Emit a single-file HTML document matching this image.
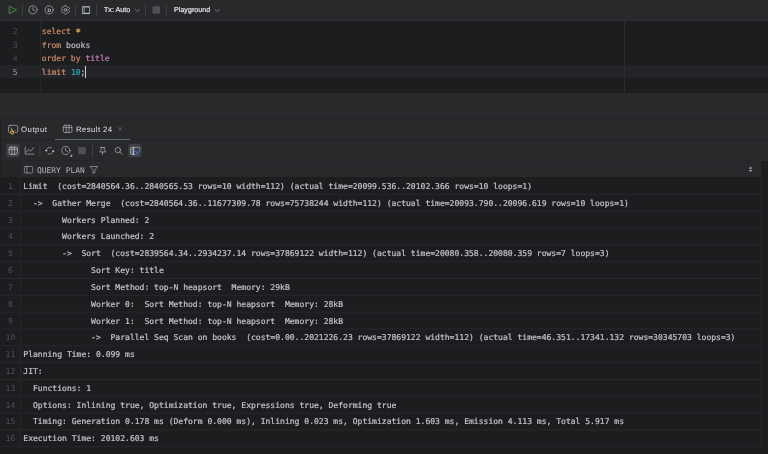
<!DOCTYPE html>
<html><head><meta charset="utf-8">
<style>
*{box-sizing:border-box;margin:0;padding:0}
html,body{width:768px;height:454px;overflow:hidden;background:#28292b}
body{position:relative;-webkit-font-smoothing:antialiased;text-rendering:geometricPrecision;font-family:"Liberation Sans",sans-serif;color:#dfe1e5}
.abs{position:absolute}
.mono{font-family:"DejaVu Sans Mono","Liberation Mono",monospace;font-size:8.066px;white-space:pre}
#topbar{left:0;top:0;width:768px;height:20.4px;background:#28292b}
#editor{left:0;top:20.4px;width:768px;height:72.5px;background:#1c1d1f;overflow:hidden}
#curline{left:0;top:44.2px;width:768px;height:13.8px;background:#232428}
#gutline{left:40.1px;top:0;width:1px;height:73px;background:#27282b}
#margin{left:624px;top:0;width:1px;height:73px;background:#2a2b2e}
.ln{left:0;width:17.5px;text-align:right;color:#4b5059;height:13.5px;line-height:13.5px}
.code{-webkit-text-stroke:0.18px;left:41.8px;height:13.5px;line-height:13.5px;color:#bcbec4}
.k{color:#cf8e6d}.s{color:#e9b350}.p{color:#c77dbb}.n{color:#2aacb8}
.ui{color:#dfe1e5;white-space:pre;will-change:transform;-webkit-text-stroke:0.22px #dfe1e5}
.tb{font-size:7.05px;letter-spacing:0.06px}
.tab{font-size:7.8px;-webkit-text-stroke:0}
#sep1{left:0;top:117.5px;width:768px;height:1px;background:#212225}
#sep2{left:0;top:138.8px;width:768px;height:1px;background:#212225}
#tabul{left:55px;top:138.7px;width:75.2px;height:1.3px;background:#64676d}
#grid{left:0;top:160.8px;width:768px;height:294px;background:#1c1d1f}
#hdr{left:20.7px;top:160.4px;width:740.6px;height:16.9px;background:#28292b}
.row{left:0;width:761.3px;height:16.82px}
.rn{top:0.9px;left:0;width:20.8px;text-align:center;color:#50535a;line-height:16.84px;height:16.84px}
.rt{top:0.9px;left:23.3px;color:#c0c2c8;-webkit-text-stroke:0.22px #c0c2c8;line-height:16.84px;height:16.84px}
#vline{left:20.2px;top:177.3px;width:1px;height:269.5px;background:#26282b}
#vline2{left:760.8px;top:177.3px;width:1px;height:269.5px;background:#26282b}
</style></head><body>
<div id="topbar" class="abs"></div>
<div id="editor" class="abs">
  <div id="curline" class="abs"></div>
  <div id="gutline" class="abs"></div>
  <div id="margin" class="abs"></div>
  <div class="abs" style="left:0;top:0;width:768px;height:72px;will-change:transform">
  <div class="abs" style="left:51.8px;top:0.2px;width:1px;height:0.9px;background:#8f6450"></div>
  <div class="abs" style="left:100.9px;top:0.2px;width:1px;height:0.9px;background:#8f6450"></div>
  <div class="abs mono ln" style="top:5.0px">2</div>
  <div class="abs mono ln" style="top:18.5px">3</div>
  <div class="abs mono ln" style="top:32.0px">4</div>
  <div class="abs mono ln" style="top:45.5px;color:#a1a3ab">5</div>
  <div class="abs mono code" style="top:5.0px"><span class="k">select</span> <span class="s" style="position:relative;top:1.3px;font-weight:bold;font-size:8.8px;line-height:8px;display:inline-block;width:4.85px;text-indent:-0.3px">*</span></div>
  <div class="abs mono code" style="top:18.5px"><span class="k">from</span> books</div>
  <div class="abs mono code" style="top:32.0px"><span class="k">order by</span> <span class="p">title</span></div>
  <div class="abs mono code" style="top:45.5px"><span class="k">limit</span> <span class="n">10</span>;</div>
  </div>
  <div class="abs" style="left:84.9px;top:45.6px;width:0.9px;height:12px;background:#ced0d6"></div>
</div>
<div class="abs" style="left:0;top:19.9px;width:768px;height:1px;background:#2d2f32"></div>
<div class="abs ui tb" style="left:104.2px;top:7.2px">Tx: Auto</div>
<div class="abs ui tb" style="left:174.4px;top:7.2px">Playground</div>
<div id="sep1" class="abs"></div>
<div id="sep2" class="abs"></div>
<div class="abs ui tab" style="left:20.9px;top:125px;letter-spacing:0.5px">Output</div>
<div class="abs ui tab" style="left:76.2px;top:125px;letter-spacing:0.4px">Result 24</div>
<div id="tabul" class="abs"></div>
<div id="grid" class="abs"></div>
<div class="abs" style="left:0;top:160.4px;width:20.7px;height:16.9px;background:#242527"></div>
<div id="hdr" class="abs"></div>
<div class="abs" style="left:1px;top:160.1px;width:760.3px;height:0.9px;background:#242528"></div>
<div class="abs" style="left:0;top:118px;width:1.1px;height:60px;background:#1d1e20"></div>
<div class="abs mono" style="left:36.6px;top:165.5px;font-size:7.95px;color:#b2b5bb;will-change:transform">QUERY PLAN</div>
<div id="rows" style="will-change:transform">
<div class="abs row" style="top:178.08px"><div class="abs mono rn">1</div><div class="abs mono rt">Limit  (cost=2840564.36..2840565.53 rows=10 width=112) (actual time=20099.536..20102.366 rows=10 loops=1)</div></div>
<div class="abs row" style="top:194.90px"><div class="abs mono rn">2</div><div class="abs mono rt">  -&gt;  Gather Merge  (cost=2840564.36..11677309.78 rows=75738244 width=112) (actual time=20093.790..20096.619 rows=10 loops=1)</div></div>
<div class="abs row" style="top:211.72px"><div class="abs mono rn">3</div><div class="abs mono rt">        Workers Planned: 2</div></div>
<div class="abs row" style="top:228.54px"><div class="abs mono rn">4</div><div class="abs mono rt">        Workers Launched: 2</div></div>
<div class="abs row" style="top:245.36px"><div class="abs mono rn">5</div><div class="abs mono rt">        -&gt;  Sort  (cost=2839564.34..2934237.14 rows=37869122 width=112) (actual time=20080.358..20080.359 rows=7 loops=3)</div></div>
<div class="abs row" style="top:262.18px"><div class="abs mono rn">6</div><div class="abs mono rt">              Sort Key: title</div></div>
<div class="abs row" style="top:279.00px"><div class="abs mono rn">7</div><div class="abs mono rt">              Sort Method: top-N heapsort  Memory: 29kB</div></div>
<div class="abs row" style="top:295.82px"><div class="abs mono rn">8</div><div class="abs mono rt">              Worker 0:  Sort Method: top-N heapsort  Memory: 28kB</div></div>
<div class="abs row" style="top:312.64px"><div class="abs mono rn">9</div><div class="abs mono rt">              Worker 1:  Sort Method: top-N heapsort  Memory: 28kB</div></div>
<div class="abs row" style="top:329.46px"><div class="abs mono rn">10</div><div class="abs mono rt">              -&gt;  Parallel Seq Scan on books  (cost=0.00..2021226.23 rows=37869122 width=112) (actual time=46.351..17341.132 rows=30345703 loops=3)</div></div>
<div class="abs row" style="top:346.28px"><div class="abs mono rn">11</div><div class="abs mono rt">Planning Time: 0.099 ms</div></div>
<div class="abs row" style="top:363.10px"><div class="abs mono rn">12</div><div class="abs mono rt">JIT:</div></div>
<div class="abs row" style="top:379.92px"><div class="abs mono rn">13</div><div class="abs mono rt">  Functions: 1</div></div>
<div class="abs row" style="top:396.74px"><div class="abs mono rn">14</div><div class="abs mono rt">  Options: Inlining true, Optimization true, Expressions true, Deforming true</div></div>
<div class="abs row" style="top:413.56px"><div class="abs mono rn">15</div><div class="abs mono rt">  Timing: Generation 0.178 ms (Deform 0.000 ms), Inlining 0.023 ms, Optimization 1.603 ms, Emission 4.113 ms, Total 5.917 ms</div></div>
<div class="abs row" style="top:430.38px"><div class="abs mono rn">16</div><div class="abs mono rt">Execution Time: 20102.603 ms</div></div>
</div>
<div id="vline" class="abs"></div>
<div id="vline2" class="abs"></div>
<svg class="abs" style="left:0;top:0" width="768" height="454" viewBox="0 0 768 454" fill="none" stroke="#c3c5cb" stroke-width="0.62" stroke-linecap="round" stroke-linejoin="round">
<!-- top toolbar -->
<path d="M9.5 6.3 L16.5 9.9 L9.5 13.5 Z" stroke="#57965c" fill="#253627" stroke-width="0.75"/>
<g stroke="none" fill="#43454a">
<rect x="22" y="4" width="0.8" height="11.7"/><rect x="75.1" y="4" width="0.8" height="11.7"/><rect x="96" y="4" width="0.8" height="11.7"/>
<rect x="145.2" y="4" width="0.8" height="11.7"/><rect x="165.8" y="4" width="0.8" height="11.7"/>
<rect x="39.5" y="144.4" width="0.8" height="12.2"/><rect x="92.2" y="144.4" width="0.8" height="12.2"/>
</g>
<circle cx="33" cy="9.85" r="4.05"/><path d="M33 7.7 V10 L34.7 11"/>
<circle cx="49.2" cy="9.85" r="4.05"/>
<text x="49.3" y="11.6" text-anchor="middle" font-family="Liberation Sans, sans-serif" font-weight="bold" font-size="4.9" fill="#c8cad0" stroke="none">D</text>
<path d="M65.45 5.51 L65.73 5.54 L66.01 5.64 L66.26 5.81 L66.45 6.14 L66.60 6.48 L66.77 6.68 L66.94 6.83 L67.12 6.96 L67.32 7.06 L67.55 7.13 L67.80 7.18 L68.17 7.14 L68.56 7.14 L68.83 7.27 L69.05 7.46 L69.22 7.68 L69.33 7.95 L69.38 8.23 L69.36 8.53 L69.17 8.86 L68.95 9.16 L68.86 9.41 L68.82 9.64 L68.80 9.86 L68.82 10.08 L68.86 10.31 L68.95 10.56 L69.17 10.86 L69.36 11.19 L69.38 11.49 L69.33 11.77 L69.22 12.03 L69.05 12.26 L68.83 12.45 L68.56 12.58 L68.17 12.58 L67.80 12.54 L67.55 12.59 L67.32 12.66 L67.12 12.76 L66.94 12.89 L66.77 13.04 L66.60 13.24 L66.45 13.58 L66.26 13.91 L66.01 14.08 L65.73 14.18 L65.45 14.21 L65.17 14.18 L64.89 14.08 L64.64 13.91 L64.45 13.58 L64.30 13.24 L64.13 13.04 L63.96 12.89 L63.78 12.76 L63.58 12.66 L63.35 12.59 L63.10 12.54 L62.73 12.58 L62.34 12.58 L62.07 12.45 L61.85 12.26 L61.68 12.04 L61.57 11.77 L61.52 11.49 L61.54 11.19 L61.73 10.86 L61.95 10.56 L62.04 10.31 L62.08 10.08 L62.10 9.86 L62.08 9.64 L62.04 9.41 L61.95 9.16 L61.73 8.86 L61.54 8.53 L61.52 8.23 L61.57 7.95 L61.68 7.68 L61.85 7.46 L62.07 7.27 L62.34 7.14 L62.73 7.14 L63.10 7.18 L63.35 7.13 L63.58 7.06 L63.77 6.96 L63.96 6.83 L64.13 6.68 L64.30 6.48 L64.45 6.14 L64.64 5.81 L64.89 5.64 L65.17 5.54Z"/><circle cx="65.45" cy="9.86" r="1.35" stroke-width="0.75"/>
<path d="M82 6.8 H90 M82 13.4 H90" stroke-width="1.15" stroke-linecap="butt" stroke="#b9bcc2"/>
<path d="M82.400 7.600 V12.600 M89.600 7.600 V12.600 M84.200 7.600 V12.600" stroke-width="0.7" stroke-linecap="butt"/>
<path d="M135.1 9.4 L137.3 11.5 L139.5 9.4 M215.2 9.4 L217.4 11.5 L219.6 9.4" stroke="#a4a7ae"/>
<rect x="152.5" y="6.3" width="7.6" height="7.4" rx="1" fill="#4e5054" stroke="none"/>
<!-- tabs -->
<rect x="8.5" y="125.3" width="9.2" height="7.2" rx="1.4"/>
<path d="M10.4 127.6 L12 129 L10.4 130.4 M13 130.6 H15"/>
<circle cx="12.2" cy="132.1" r="2.7" fill="#28292b" stroke="none"/>
<path d="M11.1 131 A1.7 1.7 0 1 0 13.3 131" stroke="#f2c55c" stroke-width="1"/>
<path d="M12.2 129.9 V131.8" stroke="#f2c55c" stroke-width="1"/>
<rect x="63.3" y="125.3" width="8.6" height="7.2" rx="1.3"/><path d="M63.3 127.6 H71.9 M66.2 125.3 V132.5 M69 125.3 V132.5"/>
<path d="M118.5 127.2 L121.8 130.6 M121.8 127.2 L118.5 130.6" stroke="#6f737a"/>
<!-- result toolbar -->
<rect x="6.1" y="144" width="13.7" height="13.2" rx="2.4" fill="#3c3e42" stroke="none"/>
<rect x="9.1" y="147.1" width="8.3" height="7.2" rx="1.3" stroke="#d4d6dc"/><path d="M9.1 149.3 H17.4 M11.9 147.1 V154.3 M14.6 147.1 V154.3" stroke="#d4d6dc"/>
<path d="M25.2 147 V154.1 H34 M26.6 151.8 L28.6 149.4 L30.6 151.3 L33.6 147.6"/>
<path d="M46.25 150.80 A3.45 3.45 0 0 1 51.43 147.81 M53.15 150.80 A3.45 3.45 0 0 1 47.98 153.79"/>
<path d="M44.9 149.9 H47.6 L46.25 151.7 Z M52.0 151.7 H54.7 L53.15 149.9 Z" fill="#c8cad0" stroke="none"/>
<circle cx="65.9" cy="150.5" r="4.05"/><path d="M65.4 148.3 V150.5 L67.5 151.5"/>
<rect x="68.8" y="153.4" width="4" height="4" fill="#28292b" stroke="none"/>
<path d="M72.2 154.2 V156.6 H69.6 Z" fill="#c8cad0" stroke="none"/>
<rect x="78.2" y="146.9" width="7.7" height="7.4" rx="1" fill="#4e5054" stroke="none"/>
<path d="M100.4 147.4 H104.9 M101.2 147.4 V149.9 L99.8 152 H105.6 L104.2 149.9 V147.4 M102.6 152 V154.7"/>
<circle cx="117.9" cy="150.1" r="2.7"/><path d="M119.9 152.1 L122.5 154.3"/>
<rect x="128.1" y="144.05" width="13.8" height="13.15" rx="2.5" fill="#3c3e42" stroke="none"/>
<path d="M130.600 148.400 A1.1 1.1 0 0 1 131.700 147.300 H133.700 V154.500 H131.700 A1.1 1.1 0 0 1 130.600 153.400 Z" fill="#63666c" stroke="none"/>
<path d="M135 154.500 H131.700 A1.1 1.1 0 0 1 130.600 153.400 V148.400 A1.1 1.1 0 0 1 131.700 147.300 H138.600 A1.1 1.1 0 0 1 139.700 148.400 V150" stroke="#c8cad0" stroke-width="0.55"/>
<path d="M133.700 147.300 V154.500" stroke="#dfe1e5" stroke-width="0.8"/>
<path d="M135.500 151.400 L137.300 153.300 L139.600 151.400 M137.300 153.300 V155.300" stroke="#4678e4" stroke-width="0.9"/>
<path d="M135.500 151.400 H139.600" stroke="#4678e4" stroke-width="0.5"/>
<g fill="#26282b" stroke="none"><rect x="0" y="193.90" width="761.3" height="1"/><rect x="0" y="210.72" width="761.3" height="1"/><rect x="0" y="227.54" width="761.3" height="1"/><rect x="0" y="244.36" width="761.3" height="1"/><rect x="0" y="261.18" width="761.3" height="1"/><rect x="0" y="278.00" width="761.3" height="1"/><rect x="0" y="294.82" width="761.3" height="1"/><rect x="0" y="311.64" width="761.3" height="1"/><rect x="0" y="328.46" width="761.3" height="1"/><rect x="0" y="345.28" width="761.3" height="1"/><rect x="0" y="362.10" width="761.3" height="1"/><rect x="0" y="378.92" width="761.3" height="1"/><rect x="0" y="395.74" width="761.3" height="1"/><rect x="0" y="412.56" width="761.3" height="1"/><rect x="0" y="429.38" width="761.3" height="1"/><rect x="0" y="446.20" width="761.3" height="1"/></g>
<!-- header -->
<g transform="translate(0,0.4)">
<rect x="24.4" y="166" width="8.3" height="6.6" rx="1.2" stroke="#b4b7bd"/><path d="M27 166 V172.600" stroke="#b4b7bd"/>
<path d="M90.3 166.100 H97.600 L94.900 169.500 V172.200 L93 172.900 V169.500 Z" stroke="#b4b7bd"/>
<path d="M748.800 168.400 L750.600 166.200 L752.400 168.400 Z M748.800 169.500 L750.600 171.700 L752.400 169.500 Z" fill="#a4a7ae" stroke="none"/>
</g>
</svg>
</body></html>
